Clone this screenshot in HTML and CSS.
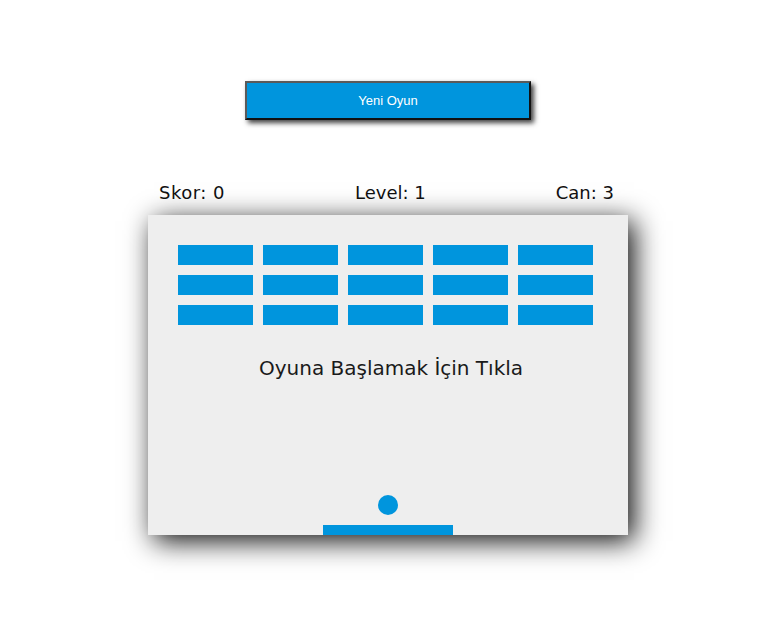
FILE: index.html
```html
<!DOCTYPE html>
<html lang="tr">
<head>
<meta charset="utf-8">
<title>Breakout</title>
<link rel="stylesheet" href="styles.css">
</head>
<body>
<div class="page">
  <button class="new-game">Yeni Oyun</button>
  <div class="stats">
    <span class="skor">Skor: 0</span>
    <span>Level: 1</span>
    <span>Can: 3</span>
  </div>
  <div class="board">
    <div class="bricks">
      <div class="brick"></div><div class="brick"></div><div class="brick"></div><div class="brick"></div><div class="brick"></div>
      <div class="brick"></div><div class="brick"></div><div class="brick"></div><div class="brick"></div><div class="brick"></div>
      <div class="brick"></div><div class="brick"></div><div class="brick"></div><div class="brick"></div><div class="brick"></div>
    </div>
    <p class="message">Oyuna Başlamak İçin Tıkla</p>
    <div class="ball"></div>
    <div class="paddle"></div>
  </div>
</div>
</body>
</html>
```

FILE: styles.css
```css
html, body {
  margin: 0;
  padding: 0;
  background: #ffffff;
}

.page {
  width: 776px;
  min-height: 631px;
  box-sizing: border-box;
  display: flex;
  flex-direction: column;
  align-items: center;
  padding-top: 81px;
  padding-bottom: 60px;
}

.new-game {
  box-sizing: border-box;
  width: 286px;
  height: 39px;
  margin: 0;
  padding: 0;
  background: #0095dd;
  color: #ffffff;
  font-family: "Liberation Sans", Arial, sans-serif;
  font-size: 13px;
  border-style: solid;
  border-width: 2px;
  border-color: #5a5a5a #111111 #111111 #5a5a5a;
  box-shadow: 3px 3px 5px rgba(0, 0, 0, 0.75);
  cursor: pointer;
}

.stats {
  box-sizing: border-box;
  width: 480px;
  margin-top: 62px;
  padding: 0 14px 0 11px;
  display: flex;
  justify-content: space-between;
  font-family: "DejaVu Sans", Verdana, sans-serif;
  font-size: 18px;
  color: #111111;
}

.skor {
  letter-spacing: 0.5px;
}

.board {
  position: relative;
  box-sizing: border-box;
  width: 480px;
  height: 320px;
  margin-top: 12px;
  padding: 30px 30px 0 30px;
  background: #eeeeee;
  box-shadow: 6px 6px 26px rgba(0, 0, 0, 0.95);
}

.bricks {
  display: grid;
  grid-template-columns: repeat(5, 75px);
  grid-auto-rows: 20px;
  gap: 10px;
}

.brick {
  background: #0095dd;
}

.message {
  margin: 31px 0 0 6px;
  text-align: center;
  font-family: "DejaVu Sans", Verdana, sans-serif;
  font-size: 20px;
  line-height: 24px;
  color: #1a1a1a;
}

.ball {
  position: absolute;
  left: 230px;
  top: 280px;
  width: 20px;
  height: 20px;
  border-radius: 50%;
  background: #0095dd;
}

.paddle {
  position: absolute;
  left: 175px;
  bottom: 0;
  width: 130px;
  height: 10px;
  background: #0095dd;
}
```
